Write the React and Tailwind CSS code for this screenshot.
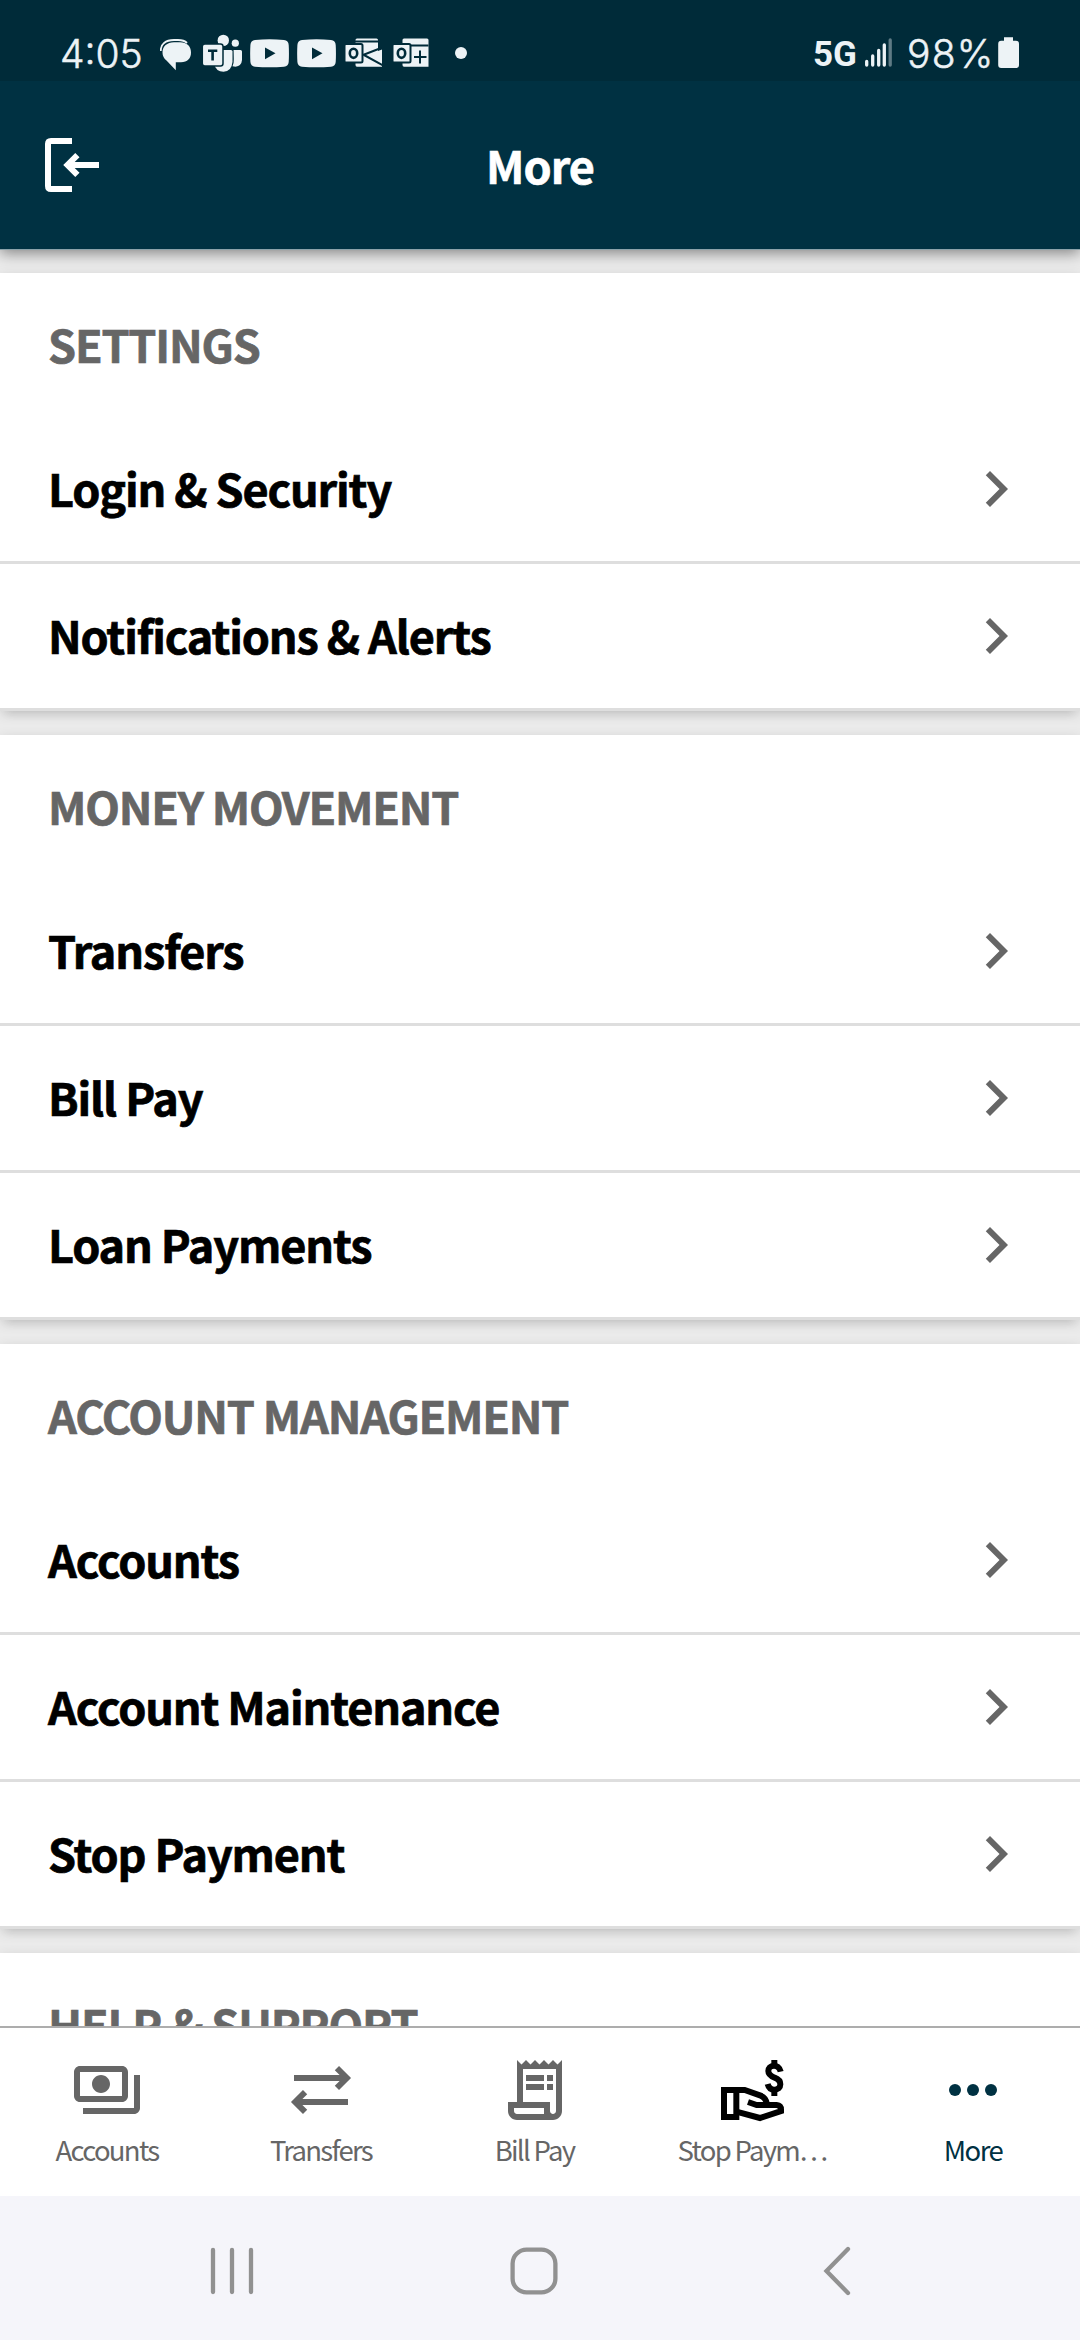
import React from "react";

const SECTIONS = [
  { title: "SETTINGS", rows: ["Login & Security", "Notifications & Alerts"] },
  { title: "MONEY MOVEMENT", rows: ["Transfers", "Bill Pay", "Loan Payments"] },
  { title: "ACCOUNT MANAGEMENT", rows: ["Accounts", "Account Maintenance", "Stop Payment"] },
  { title: "HELP & SUPPORT", rows: [] },
];

const LIGHT = "#edf3f6";
const DARK = "#002b39";

function YouTubeIcon() {
  return (
    <svg width="39" height="40" viewBox="250 33 39 40" fill={LIGHT}>
      <path d="M255 40Q269.500 38.600 284 40Q288.500 40.500 288.700 45Q289.200 53.500 288.700 62Q288.500 66.200 284 66.700Q269.500 67.700 255 66.700Q250.700 66.200 250.400 62Q249.900 53.500 250.400 45Q250.700 40.500 255 40Z" />
      <path d="M265 47.500L275.500 53.300L265 59.200Z" fill={DARK} />
    </svg>
  );
}

function StatusBar() {
  return (
    <div className="flex h-[81px] items-center bg-[#002b39] pt-[25px] pl-[60px] text-[#edf3f6]">
      <span className="w-[100px] font-['Inter',sans-serif] text-[39px] leading-none font-light [-webkit-text-stroke:0.5px_#edf3f6]">4:05</span>
      <svg width="31" height="40" viewBox="160 33 31 40">
        <path d="M160.800 51C160.500 44 165.500 40.200 174 40H178C182 40 185 41 187 43" fill="none" stroke={LIGHT} strokeWidth="1.800" />
        <path d="M174 42.300H180C187 42.300 191 46.500 191 52.500C191 58.500 187.500 62 181 62.300H175.800V70.300L166.500 60.500C164 58.500 162.500 56 162.500 52.500C162.500 46.500 167 42.300 174 42.300Z" fill={LIGHT} />
      </svg>
      <svg className="ml-3" width="39" height="40" viewBox="203 33 39 40" fill={LIGHT}>
        <circle cx="223.300" cy="40.400" r="5.700" />
        <circle cx="235.300" cy="43.200" r="3.600" />
        <path d="M233.600 50H240.500Q242 50 242 51.500V60Q241.500 66 235.500 66.800L232.500 66.300Q234 63 233.800 59Z" />
        <path d="M214 50H231Q232.500 50 232.500 51.500V62Q231.500 71.500 223.500 71.800Q216 71.800 214 64Z" />
        <rect x="202.300" y="44" width="20.700" height="22" rx="2.500" stroke={DARK} strokeWidth="1.500" />
        <path d="M208 50.700H217.300M212.600 50.700V60.500" stroke={DARK} strokeWidth="2.600" />
      </svg>
      <span className="ml-2"><YouTubeIcon /></span>
      <span className="ml-2"><YouTubeIcon /></span>
      <svg className="ml-[9px]" width="37" height="40" viewBox="345 33 37 40" fill={LIGHT}>
        <path d="M355.500 40Q355.500 38.500 357 38.500H376.500Q378 38.500 378 40V51L382 49.500V66.700H357Q355.500 66.700 355.500 65Z" />
        <path d="M363 55L382.500 47.500M364 55L383 65.500M355 41.500H378" fill="none" stroke={DARK} strokeWidth="2" />
        <path d="M378.500 38V49L382.500 47V38Z" fill={DARK} />
        <rect x="344.500" y="44" width="18" height="18.500" rx="1.500" stroke={DARK} strokeWidth="2" />
        <ellipse cx="353.500" cy="53.300" rx="3.700" ry="4.600" fill="none" stroke={DARK} strokeWidth="2.600" />
      </svg>
      <svg className="ml-[11px]" width="36" height="40" viewBox="392.500 33 36 40" fill={LIGHT}>
        <path d="M402 40Q402 38.500 403.500 38.500H426.500Q428 38.500 428 40V66.700H403.500Q402 66.700 402 65Z" />
        <path d="M402 45.500H428M413.500 57H426M419.500 50.500V63.500" fill="none" stroke={DARK} strokeWidth="2" />
        <rect x="392" y="44" width="18" height="18.500" rx="1.500" stroke={DARK} strokeWidth="2" />
        <ellipse cx="401" cy="53.300" rx="3.700" ry="4.600" fill="none" stroke={DARK} strokeWidth="2.600" />
      </svg>
      <span className="ml-[26px] size-3 rounded-full bg-[#edf3f6]" />
      <span className="mt-[2px] ml-[346px] w-[52px] font-['Roboto',sans-serif] text-[35px] leading-none font-bold">5G</span>
      <svg width="27" height="40" viewBox="865 33 27 40" stroke={LIGHT} strokeWidth="3.300" strokeLinecap="round">
        <path d="M866.700 61.500V65M872.700 56V65M878.700 50.500V65M884.300 45V65" />
        <path d="M890.200 40V65" opacity="0.4" />
      </svg>
      <span className="ml-[15px] w-[91px] font-['Inter',sans-serif] text-[39px] leading-none font-light tracking-[1.2px] [-webkit-text-stroke:0.5px_#edf3f6]">98%</span>
      <svg width="21" height="40" viewBox="998 33 21 40" fill={LIGHT}>
        <path d="M1004 37.200H1013V40.800H1016Q1019 40.800 1019 44V65Q1019 68 1016 68H1001.200Q998.200 68 998.200 65V44Q998.200 40.800 1001.200 40.800H1004Z" />
      </svg>
    </div>
  );
}

function Header() {
  return (
    <header className="relative z-10 shrink-0 border-b border-[#8ba2aa] bg-[#003142] shadow-[0_3px_14px_rgba(0,0,0,0.45)]">
      <StatusBar />
      <div className="grid h-[168px] grid-cols-[1fr_auto_1fr] items-center px-9">
        <svg className="size-[72px]" viewBox="0 0 24 24" fill="none" stroke="#fff" strokeWidth="2">
          <path d="M12 4H5Q4 4 4 5V19Q4 20 5 20H12M10.500 12H21M13.800 8.700L10.500 12L13.800 15.300" />
        </svg>
        <h1 className="text-[45px] leading-[66px] font-bold tracking-[-1px] text-white [-webkit-text-stroke:0.6px_#fff]">More</h1>
      </div>
    </header>
  );
}

function Row({ label }) {
  return (
    <li className="flex h-[147px] items-center justify-between border-b-[3px] border-[#dedede] pr-12 pl-12">
      <span className="pb-[3px] text-[45px] leading-[66px] font-bold tracking-[-1.14px] text-black [-webkit-text-stroke:0.7px_#000]">{label}</span>
      <svg className="size-[72px]" viewBox="0 0 24 24" fill="#666">
        <path d="M10 6L8.590 7.410L13.170 12L8.590 16.590L10 18L16 12Z" />
      </svg>
    </li>
  );
}

function Section({ title, rows }) {
  return (
    <section className="shrink-0 bg-white shadow-[0_9px_9px_-7px_rgba(0,0,0,0.1),0_3px_12px_rgba(0,0,0,0.12)]">
      <h2 className="flex h-[144px] items-center pb-[3px] pl-12 text-[45px] leading-[66px] font-bold tracking-[-1.17px] text-[#666] [-webkit-text-stroke:0.7px_#666]">{title}</h2>
      <ul>
        {rows.map((row) => (
          <Row key={row} label={row} />
        ))}
      </ul>
    </section>
  );
}

const TABS = [
  {
    label: "Accounts",
    icon: (
      <svg className="size-[72px]" viewBox="0 0 24 24" fill="#666">
        <path d="M19 14V6c0-1.100-.9-2-2-2H3c-1.100 0-2 .9-2 2v8c0 1.100.9 2 2 2h14c1.100 0 2-.9 2-2zm-2 0H3V6h14v8zm-7-7c-1.660 0-3 1.340-3 3s1.340 3 3 3 3-1.340 3-3-1.340-3-3-3zm13 0v11c0 1.100-.9 2-2 2H4v-2h17V7h2z" />
      </svg>
    ),
  },
  {
    label: "Transfers",
    icon: (
      <svg className="size-[72px]" viewBox="0 0 24 24" fill="none" stroke="#666" strokeWidth="2">
        <path d="M3 8H20.500M17.300 4.700L20.600 8L17.300 11.300M21 16H3.500M6.700 12.700L3.400 16L6.700 19.300" />
      </svg>
    ),
  },
  {
    label: "Bill Pay",
    icon: (
      <svg className="size-[72px]" viewBox="0 0 24 24" fill="#666">
        <path d="M19.500 3.500 18 2l-1.500 1.500L15 2l-1.500 1.500L12 2l-1.500 1.500L9 2 7.500 3.500 6 2v14H3v3c0 1.660 1.340 3 3 3h12c1.660 0 3-1.340 3-3V2l-1.500 1.500zM15 20H6c-.55 0-1-.45-1-1v-1h10v2zm4-1c0 .55-.45 1-1 1s-1-.45-1-1v-3H8V5h11v14z" />
        <path d="M9 7h6v2H9zM16 7h2v2h-2zM9 10h6v2H9zM16 10h2v2h-2z" />
      </svg>
    ),
  },
  {
    label: "Stop Paym…",
    icon: (
      <svg className="size-[72px]" viewBox="18 27 216 216" fill="none" stroke="#000" strokeWidth="18">
        <path d="M42 135H79V216H42Z" />
        <path d="M79 135H104L152 152Q168 158 171 178" />
        <path d="M114 171L140 180H200Q213 181 213 194V198L150 219L79 200" />
        <path d="M193 45V62M193 136V153" />
        <path d="M212 80C209 66 199 62 192 62C181 62 175 70 175 78C175 90 184 94 194 98C205 102 211 107 211 118C211 128 204 134 193 134C182 134 176 129 173 117" />
      </svg>
    ),
  },
  {
    label: "More",
    active: true,
    icon: (
      <svg className="size-[72px]" viewBox="0 0 24 24" fill="#003142">
        <circle cx="6" cy="12" r="2" />
        <circle cx="12" cy="12" r="2" />
        <circle cx="18" cy="12" r="2" />
      </svg>
    ),
  },
];

function TabBar() {
  return (
    <nav className="grid h-[170px] shrink-0 grid-cols-[214px_214px_213px_222px_220px] border-t-2 border-[#adadad] bg-white pt-[26px]">
      {TABS.map((tab) => (
        <div key={tab.label} className="flex flex-col items-center">
          {tab.icon}
          <span
            className={
              tab.active
                ? "mt-[5px] text-[27.5px] leading-9 tracking-[-1.500px] whitespace-nowrap text-[#003142]"
                : "mt-[5px] text-[27.5px] leading-9 tracking-[-1.700px] whitespace-nowrap text-[#666]"
            }
          >
            {tab.label}
          </span>
        </div>
      ))}
    </nav>
  );
}

function SystemNav() {
  return (
    <div className="flex h-36 shrink-0 items-center bg-[#f5f5fa] pt-[6px] pl-[208px]">
      <svg width="48" height="52" viewBox="0 0 48 52" fill="none" stroke="#919191" strokeWidth="4.300" strokeLinecap="round">
        <path d="M5 5V47M24 5V47M43 5V47" />
      </svg>
      <svg className="ml-[254px]" width="48" height="52" viewBox="0 0 48 52" fill="none" stroke="#919191" strokeWidth="4.300">
        <rect x="2.600" y="4.600" width="42.800" height="42.800" rx="14" />
      </svg>
      <svg className="ml-[255px]" width="48" height="52" viewBox="0 0 48 52" fill="none" stroke="#919191" strokeWidth="4.300" strokeLinecap="round">
        <path d="M35 4L13.500 26L35 48" />
      </svg>
    </div>
  );
}

export default function App() {
  return (
    <div className="flex h-[2340px] w-[1080px] flex-col overflow-hidden bg-[#ebebeb] font-['Noto_Sans_CJK_SC',sans-serif]">
      <Header />
      <main className="flex min-h-0 flex-1 flex-col gap-6 overflow-hidden pt-[23px]">
        {SECTIONS.map((section) => (
          <Section key={section.title} title={section.title} rows={section.rows} />
        ))}
      </main>
      <TabBar />
      <SystemNav />
    </div>
  );
}
